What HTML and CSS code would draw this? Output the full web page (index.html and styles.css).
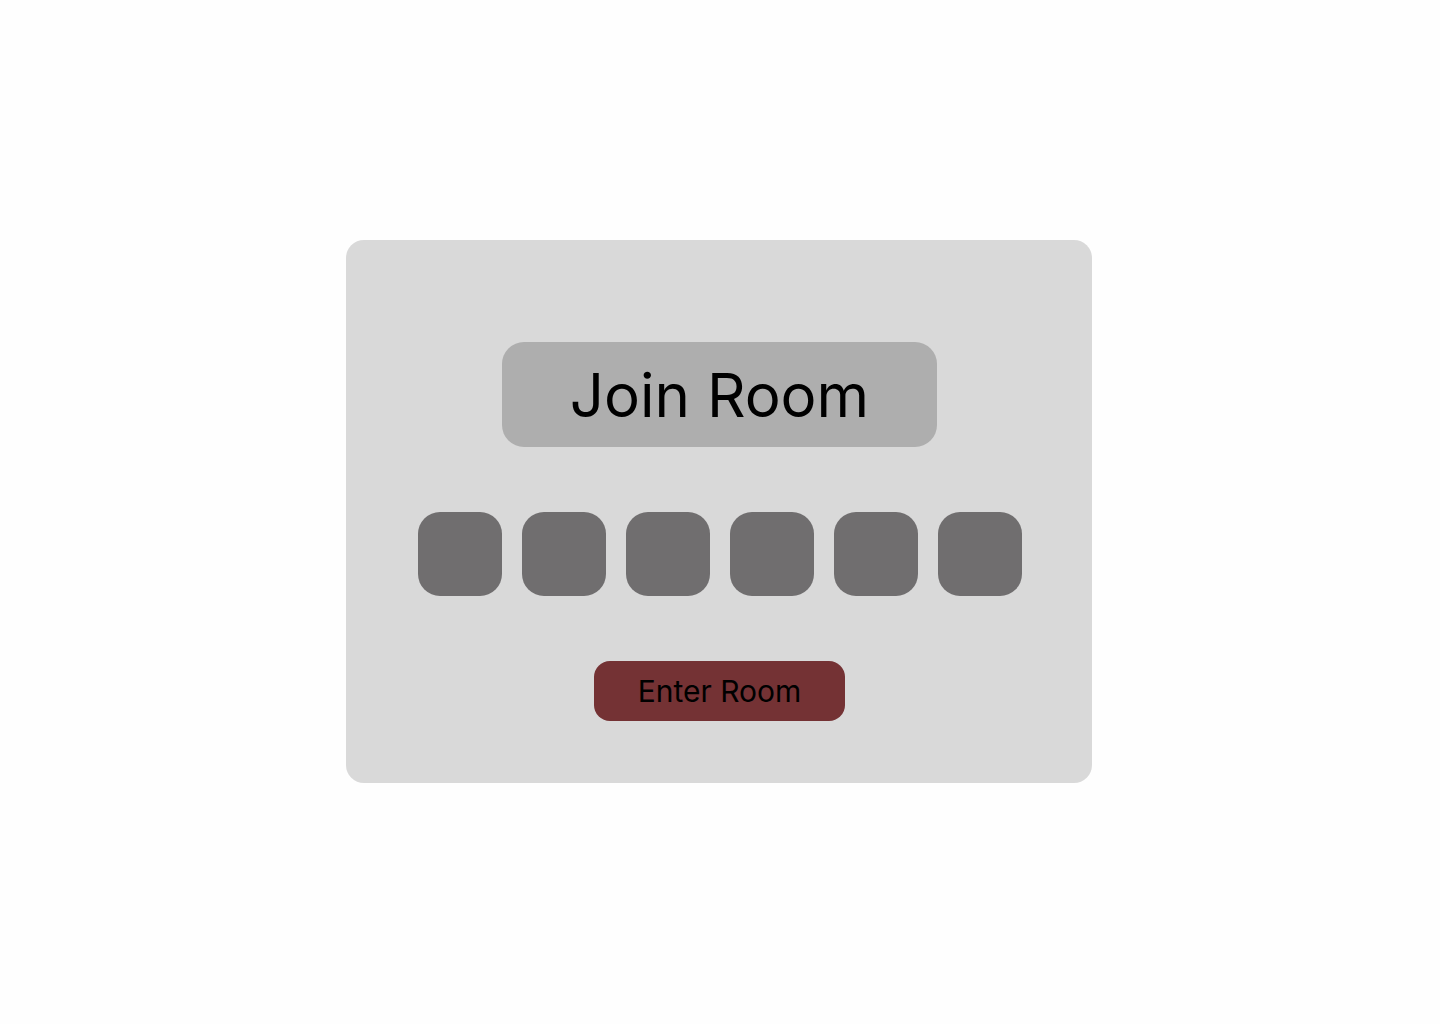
FILE: index.html
```html
<!DOCTYPE html>
<html lang="en">
<head>
<meta charset="utf-8">
<title>Join Room</title>
<link rel="stylesheet" href="styles.css">
</head>
<body>
<main class="page">
  <section class="card">
    <h1 class="title">Join Room</h1>
    <div class="code">
      <div class="digit"></div>
      <div class="digit"></div>
      <div class="digit"></div>
      <div class="digit"></div>
      <div class="digit"></div>
      <div class="digit"></div>
    </div>
    <button class="enter">Enter Room</button>
  </section>
</main>
</body>
</html>
```
FILE: styles.css
```css
html, body {
  margin: 0;
  padding: 0;
  background: #fefefe;
  font-family: Inter, "Noto Sans", sans-serif;
}
.page {
  width: 1440px;
  height: 1024px;
  display: flex;
  align-items: center;
  justify-content: center;
}
.card {
  box-sizing: border-box;
  width: 746px;
  height: 543px;
  margin-top: -1px;
  margin-left: -2px;
  background: #d9d9d9;
  border-radius: 18px;
  padding-top: 102px;
  display: flex;
  flex-direction: column;
  align-items: center;
}
.title {
  box-sizing: border-box;
  margin: 0 0 0 1px;
  width: 435px;
  height: 105px;
  background: #aeaeae;
  border-radius: 22px;
  display: flex;
  align-items: center;
  justify-content: center;
  font-size: 60px;
  font-weight: 400;
  color: #000;
}
.code {
  display: flex;
  gap: 20px;
  margin-top: 65px;
  margin-left: 2px;
}
.digit {
  width: 84px;
  height: 84px;
  background: #706e6f;
  border-radius: 22px;
}
.enter {
  margin-top: 65px;
  margin-left: 1px;
  width: 251px;
  height: 60px;
  border: 0;
  border-radius: 16px;
  background: #743234;
  color: #000;
  font-family: Inter, "Noto Sans", sans-serif;
  font-size: 30px;
  font-weight: 400;
  padding: 0;
}
```
